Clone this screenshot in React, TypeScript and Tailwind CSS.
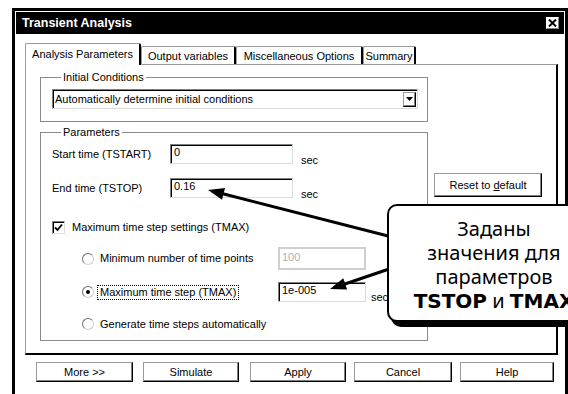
import React from 'react';

const sunken =
  'border border-t-[#808080] border-l-[#808080] border-r-[#dcdcdc] border-b-[#dcdcdc] shadow-[inset_1px_1px_0_#000] bg-white';
const raised =
  'border border-t-[#9a9a9a] border-l-[#9a9a9a] border-r-black border-b-black shadow-[inset_-1px_-1px_0_#808080] bg-white';

const Radio: React.FC<{ checked?: boolean }> = ({ checked }) => (
  <div className="w-[12px] h-[12px] rounded-full border border-t-[#6f6f6f] border-l-[#6f6f6f] border-r-[#cfcfcf] border-b-[#cfcfcf] flex items-center justify-center shrink-0">
    {checked && <div className="w-[4px] h-[4px] rounded-full bg-black" />}
  </div>
);

const Btn: React.FC<{ label: React.ReactNode; className?: string }> = ({ label, className }) => (
  <div className={`${raised} h-[20px] flex items-center justify-center ${className ?? ''}`}>{label}</div>
);

const App: React.FC = () => {
  return (
    <div className="relative w-[568px] h-[394px] overflow-hidden bg-white text-black text-[11px] leading-[13px] font-['Liberation_Sans',Arial,sans-serif]">
      <div className="ml-[12px] mt-[8px] w-[556px] h-[420px] border-[3px] border-black p-[1px] flex flex-col">
        {/* title bar */}
        <div className="h-[22px] bg-black flex items-center justify-between pl-[6px] pr-[5px]">
          <span className="text-white font-bold text-[12.5px]">Transient Analysis</span>
          <div className="w-[13px] h-[12px] bg-white border border-r-[#808080] border-b-[#808080] border-t-white border-l-white flex items-center justify-center">
            <svg width="9" height="8" viewBox="0 0 9 8">
              <path d="M1 0.5 L8 7.5 M8 0.5 L1 7.5" stroke="#000" strokeWidth="2" />
            </svg>
          </div>
        </div>

        {/* tabs */}
        <div className="mt-[9px] ml-[9px] flex items-end h-[21px]">
          <div className="relative z-10 -mb-[1px] h-[22px] w-[116px] bg-white border-t border-l border-[#9a9a9a] border-r-2 border-r-black rounded-t-[2px] pt-[4px] text-center">
            Analysis Parameters
          </div>
          <div className="h-[18px] w-[95px] border-t border-l border-[#9a9a9a] border-r-2 border-r-black rounded-t-[2px] pt-[3px] text-center">
            Output variables
          </div>
          <div className="h-[18px] w-[127px] border-t border-l border-[#9a9a9a] border-r-2 border-r-black rounded-t-[2px] pt-[3px] text-center">
            Miscellaneous Options
          </div>
          <div className="h-[18px] w-[53px] border-t border-l border-[#9a9a9a] border-r-2 border-r-black rounded-t-[2px] pt-[3px] text-center">
            Summary
          </div>
        </div>

        {/* tab panel */}
        <div className="ml-[9px] w-[533px] h-[291px] border-t border-l border-[#9a9a9a] border-r-2 border-b-2 border-r-black border-b-black pl-[14px] pt-[6px] flex">
          <div className="w-[388px] flex flex-col">
            <fieldset className="border border-[#8a8a8a] pl-[11px] pb-[12px]">
              <legend className="ml-[9px] px-[2px] leading-[13px]">Initial Conditions</legend>
              <div className={`${sunken} mt-[5px] w-[366px] h-[20px] flex items-center justify-between pl-[2px] pr-[1px]`}>
                <span>Automatically determine initial conditions</span>
                <div className={`${raised} w-[13px] h-[15px] flex items-center justify-center`}>
                  <svg width="7" height="4" viewBox="0 0 7 4">
                    <path d="M0 0 H7 L3.5 4 Z" fill="#000" />
                  </svg>
                </div>
              </div>
            </fieldset>

            <fieldset className="mt-[4px] border border-[#8a8a8a] pl-[11px] pb-[9px]">
              <legend className="ml-[9px] px-[2px] leading-[13px]">Parameters</legend>

              <div className="mt-[5px] h-[20px] flex items-center">
                <span className="w-[118px]">Start time (TSTART)</span>
                <div className={`${sunken} w-[123px] h-[20px] pl-[3px] pt-[1px]`}>0</div>
                <span className="ml-[8px] self-end -mb-[3px]">sec</span>
              </div>

              <div className="mt-[14px] h-[20px] flex items-center">
                <span className="w-[118px]">End time (TSTOP)</span>
                <div className={`${sunken} w-[123px] h-[20px] pl-[3px] pt-[1px]`}>0.16</div>
                <span className="ml-[8px] self-end -mb-[3px]">sec</span>
              </div>

              <div className="mt-[22px] h-[14px] flex items-center">
                <div className={`${sunken} w-[13px] h-[13px] flex items-center justify-center`}>
                  <svg width="9" height="9" viewBox="0 0 9 9">
                    <path d="M1 4.5 L3.5 7 L8 1.5" stroke="#000" strokeWidth="1.8" fill="none" />
                  </svg>
                </div>
                <span className="ml-[7px]">Maximum time step settings (TMAX)</span>
              </div>

              <div className="mt-[13px] h-[23px] flex items-center">
                <div className="w-[226px] pl-[30px] flex items-center">
                  <Radio />
                  <span className="ml-[3px] border border-transparent px-[2px]">Minimum number of time points</span>
                </div>
                <div className="w-[88px] h-[23px] border-2 border-[#cfcfcf] pl-[2px] pt-[2px] text-[#b0b0b0]">100</div>
              </div>

              <div className="mt-[12px] h-[20px] flex items-center">
                <div className="w-[226px] pl-[30px] flex items-center">
                  <Radio checked />
                  <span className="ml-[3px] border border-dotted border-black px-[2px]">Maximum time step (TMAX)</span>
                </div>
                <div className={`${sunken} w-[88px] h-[20px] pl-[3px] pt-[1px]`}>1e-005</div>
                <span className="ml-[5px] self-end -mb-[2px]">sec</span>
              </div>

              <div className="mt-[15px] h-[14px] flex items-center">
                <div className="pl-[30px] flex items-center">
                  <Radio />
                  <span className="ml-[3px] border border-transparent px-[2px]">Generate time steps automatically</span>
                </div>
              </div>
            </fieldset>
          </div>

          <div className="ml-[6px] mt-[102px]">
            <Btn
              className="w-[108px] h-[24px]"
              label={
                <span>
                  Reset to <span className="underline">d</span>efault
                </span>
              }
            />
          </div>
        </div>

        {/* buttons */}
        <div className="mt-[7px] flex">
          <Btn className="ml-[20px] w-[97px]" label="More >>" />
          <Btn className="ml-[10px] w-[96px]" label="Simulate" />
          <Btn className="ml-[11px] w-[96px]" label="Apply" />
          <Btn className="ml-[8px] w-[98px]" label="Cancel" />
          <Btn className="ml-[8px] w-[94px]" label="Help" />
        </div>
      </div>

      {/* annotation arrows */}
      <svg className="absolute inset-0 pointer-events-none" width="568" height="394" viewBox="0 0 568 394">
        <line x1="392" y1="237" x2="220" y2="193" stroke="#000" strokeWidth="3" />
        <polygon points="208,190 222,199.7 225,188.1" fill="#000" />
        <line x1="392" y1="268" x2="342" y2="285" stroke="#000" strokeWidth="3" />
        <polygon points="330,289 347.1,289.6 343.3,278.2" fill="#000" />
      </svg>

      {/* callout */}
      <div className="absolute left-[387px] top-[204px] w-[214px] h-[118px] bg-white border-2 border-black rounded-[10px] shadow-[4px_5px_0_#000] flex flex-col items-center pt-[11px] text-[20px] leading-[24px] font-['Noto_Sans','DejaVu_Sans',sans-serif]">
        <span>Заданы</span>
        <span>значения для</span>
        <span>параметров</span>
        <span className="whitespace-nowrap">
          <span className="font-bold font-['DejaVu_Sans',sans-serif]">TSTOP</span> и{' '}
          <span className="font-bold font-['DejaVu_Sans',sans-serif]">TMAX</span>
        </span>
      </div>
    </div>
  );
};

export default App;
